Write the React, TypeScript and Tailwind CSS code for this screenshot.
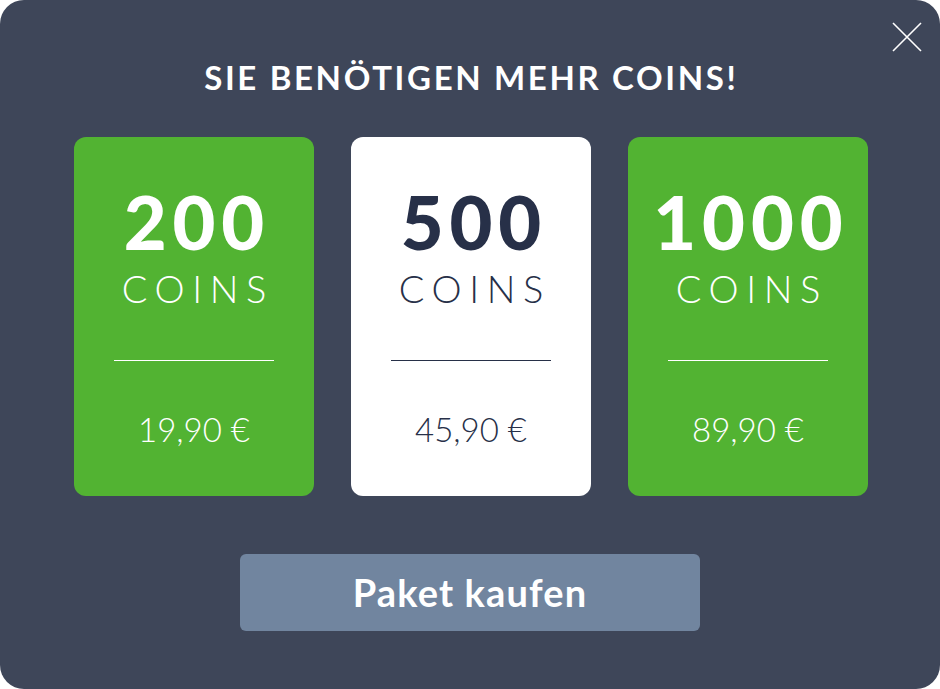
type Pack = { amount: string; price: string; highlight?: boolean };

const packs: Pack[] = [
  { amount: "200", price: "19,90 €" },
  { amount: "500", price: "45,90 €", highlight: true },
  { amount: "1000", price: "89,90 €" },
];

const PackCard = ({ amount, price, highlight }: Pack) => {
  const text = highlight ? "text-[#273048]" : "text-white";
  const line = highlight ? "bg-[#273048]" : "bg-white";
  return (
    <div
      className={`w-[240px] h-[359px] rounded-[12px] flex flex-col items-center ${
        highlight ? "bg-white" : "bg-[#52b332]"
      } ${text}`}
    >
      <div className="mt-[48px] text-[74px] leading-none font-black tracking-[0.08em] pl-[0.08em]">{amount}</div>
      <div className="mt-[10px] text-[38px] leading-none font-light tracking-[0.2em] pl-[0.2em]">COINS</div>
      <div className={`mt-[53px] w-[160px] h-px ${line}`} />
      <div className="mt-[52px] text-[33px] leading-none font-light">{price}</div>
    </div>
  );
};

export default function App() {
  return (
    <div className="w-[940px] h-[689px] bg-white" style={{ fontFamily: "Lato, 'Open Sans', sans-serif" }}>
      <div className="relative w-full h-full rounded-[24px] bg-[#3e4659] flex flex-col items-center">
        <button className="absolute top-[22px] left-[892px] text-white">
          <svg width="30" height="30" viewBox="0 0 30 30" fill="none" stroke="currentColor" strokeWidth="1.6">
            <path d="M1 1L29 29M29 1L1 29" />
          </svg>
        </button>
        <h1 className="mt-[61px] text-[33px] leading-none font-bold text-white tracking-[0.08em] pl-[0.08em]">
          SIE BENÖTIGEN MEHR COINS!
        </h1>
        <div className="mt-[43px] ml-[2px] flex gap-[37px]">
          {packs.map((p) => (
            <PackCard key={p.amount} {...p} />
          ))}
        </div>
        <button className="mt-[58px] w-[460px] h-[77px] rounded-[6px] bg-[#71859f] text-white text-[38px] font-bold tracking-[0.03em]">
          Paket kaufen
        </button>
      </div>
    </div>
  );
}
